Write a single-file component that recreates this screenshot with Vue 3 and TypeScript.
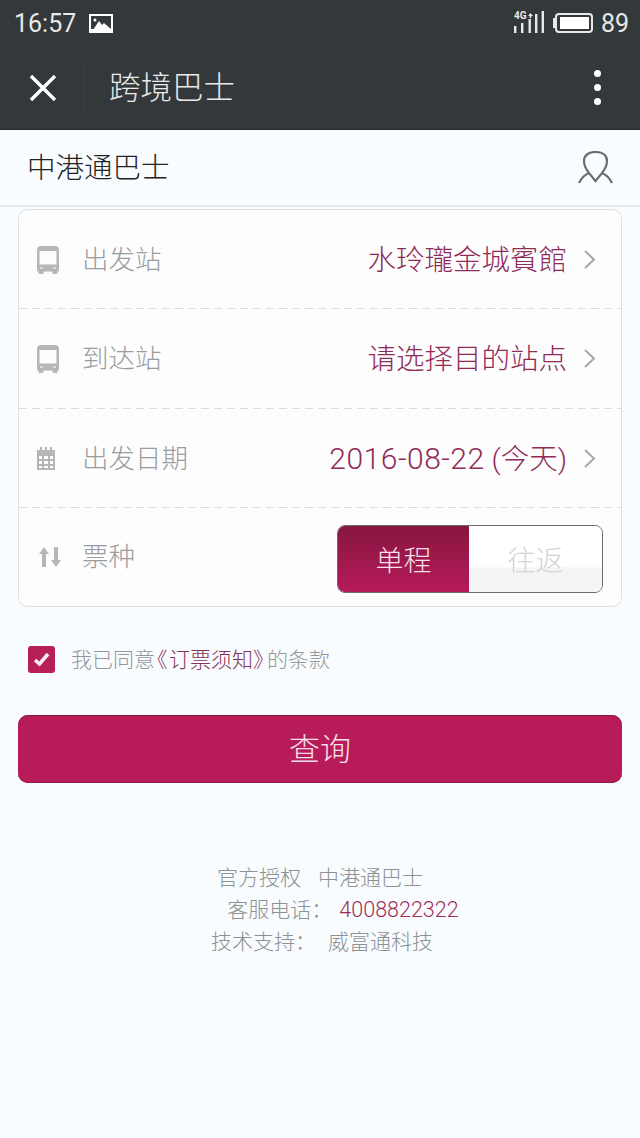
<script setup lang="ts">
interface Row {
  label: string
  value: string
  num?: string
  icon: 'bus' | 'calendar'
}

const rows: Row[] = [
  { label: '出发站', value: '水玲瓏金城賓館', icon: 'bus' },
  { label: '到达站', value: '请选择目的站点', icon: 'bus' },
  { label: '出发日期', num: '2016-08-22', value: ' (今天)', icon: 'calendar' }
]
</script>

<template>
  <div class="page">
    <div class="status-bar">
      <div class="status-left">
        <span class="clock">16:57</span>
        <svg class="pic-icon" width="24" height="19" viewBox="0 0 24 19">
          <rect width="24" height="19" fill="#fff" />
          <rect x="2" y="2" width="20" height="13" fill="#33383a" />
          <path d="M2 19 L10 7 L13 11 L15 9 L22 15 V19 Z" fill="#fff" />
          <circle cx="6" cy="6" r="1.500" fill="#fff" />
        </svg>
      </div>
      <div class="status-right">
        <svg width="30" height="22" viewBox="0 0 30 22" class="signal">
          <text x="0" y="8" class="net">4G</text>
          <path d="M16.500 2 L19 5 L14 5 Z M15.700 5 h1.600 v2 h-1.600 Z" fill="#e8e8e8" />
          <rect x="0" y="15" width="2.400" height="7" fill="#e8e8e8" />
          <rect x="7" y="12" width="2.400" height="10" fill="#e8e8e8" />
          <rect x="14.500" y="8" width="2.400" height="14" fill="#e8e8e8" />
          <rect x="21" y="3" width="2.400" height="19" fill="#e8e8e8" />
          <rect x="27.600" y="0" width="2.400" height="22" fill="#e8e8e8" />
        </svg>
        <div class="battery"><div class="battery-fill"></div></div>
        <span class="battery-num">89</span>
      </div>
    </div>

    <div class="nav-bar">
      <svg class="close-icon" width="28" height="28" viewBox="0 0 28 28">
        <path d="M2 2 L26 26 M26 2 L2 26" stroke="#fff" stroke-width="3.400" fill="none" />
      </svg>
      <div class="nav-divider"></div>
      <div class="nav-title">跨境巴士</div>
      <div class="more">
        <span></span><span></span><span></span>
      </div>
    </div>

    <div class="sub-head">
      <div class="sub-title">中港通巴士</div>
      <svg width="36" height="34" viewBox="0 0 36 34">
        <path d="M11 22 C7 17 6 14 6 10 C6 4 11 1 17.500 1 C24 1 29 4 29 10 C29 14 28 17 24 22 M1 32 C3 28 6 24 11 22 L17.500 30 L24 22 C29 24 32 28 34 32" stroke="#6a6e70" stroke-width="2.200" fill="none" />
      </svg>
    </div>

    <div class="form-card">
      <div v-for="row in rows" :key="row.label" class="form-row">
        <svg v-if="row.icon === 'bus'" class="row-icon" width="22" height="28" viewBox="0 0 22 28">
          <path fill-rule="evenodd" fill="#b4b6b8" d="M4 0 H18 C20.500 0 22 1.500 22 4 V24 C22 25 21.500 25.500 20.500 25.500 V27 C20.500 27.600 20 28 19.500 28 H16.500 C16 28 15.500 27.600 15.500 27 V25.500 H6.500 V27 C6.500 27.600 6 28 5.500 28 H2.500 C2 28 1.500 27.600 1.500 27 V25.500 C0.500 25.500 0 25 0 24 V4 C0 1.500 1.500 0 4 0 Z M2.500 5 V18.500 H19.500 V5 Z" />
          <path fill="#d8d9da" d="M3 21 h3 v2 h-3 Z M16 21 h3 v2 h-3 Z" />
        </svg>
        <svg v-else class="row-icon" width="18" height="23" viewBox="0 0 18 23">
          <path fill-rule="evenodd" fill="#b4b6b8" d="M0 3 H3 V0 H5 V3 H8 V0 H10 V3 H13 V0 H15 V3 H18 V23 H0 Z M2 9 V12 H5 V9 Z M7 9 V12 H11 V9 Z M13 9 V12 H16 V9 Z M2 14 V17 H5 V14 Z M7 14 V17 H11 V14 Z M13 14 V17 H16 V14 Z M2 19 V21 H5 V19 Z M7 19 V21 H11 V19 Z M13 19 V21 H16 V19 Z" />
        </svg>
        <span class="row-label">{{ row.label }}</span>
        <span class="row-value"><span v-if="row.num" class="row-num">{{ row.num }}</span>{{ row.value }}</span>
        <svg class="chevron" width="13" height="21" viewBox="0 0 13 21">
          <path d="M2 2 L11 10.500 L2 19" stroke="#a5a7a9" stroke-width="2" fill="none" />
        </svg>
      </div>
      <div class="form-row last">
        <svg class="row-icon arrows" width="22" height="20" viewBox="0 0 22 20">
          <path fill="#b4b6b8" d="M5 0 L10 7 H7 V20 H3 V7 H0 Z M15 0 H19 V13 H22 L17 20 L12 13 H15 Z" />
        </svg>
        <span class="row-label">票种</span>
        <div class="toggle">
          <div class="toggle-on">单程</div>
          <div class="toggle-off">往返</div>
        </div>
      </div>
    </div>

    <div class="agree">
      <div class="checkbox">
        <svg width="18" height="16" viewBox="0 0 18 16">
          <path d="M2 9 L6.500 13 L15 3" stroke="#fbeaf0" stroke-width="3.600" fill="none" />
        </svg>
      </div>
      <span class="agree-text">我已同意<span class="notice"><span class="bracket">《</span>订票须知<span class="bracket">》</span></span>的条款</span>
    </div>

    <button class="query" type="button">查询</button>

    <div class="footer">
      <div><span class="gap-a">官方授权</span>中港通巴士</div>
      <div class="phone-line"><span class="gap-b">客服电话：</span><span class="phone">4008822322</span></div>
      <div class="tech-line"><span class="gap-c">技术支持：</span>威富通科技</div>
    </div>
  </div>
</template>

<style>
html,
body {
  margin: 0;
  background: #f8fcfe;
}
</style>

<style scoped>
.page {
  width: 640px;
  height: 1138px;
  overflow: hidden;
  background: #f8fcfe;
  font-family: "Roboto", "Noto Sans CJK SC", sans-serif;
  font-weight: 300;
}

.status-bar {
  height: 46px;
  background: #33383a;
  display: flex;
  align-items: center;
  justify-content: space-between;
  padding: 0 11px 0 14px;
  color: #e8e8e8;
  font-size: 25px;
  font-weight: 400;
}

.status-left,
.status-right {
  display: flex;
  align-items: center;
}

.pic-icon {
  margin-left: 13px;
}

.signal {
  margin-top: -2px;
}

.net {
  font-size: 10px;
  font-weight: 700;
  fill: #e8e8e8;
}

.battery {
  position: relative;
  width: 38px;
  height: 20px;
  margin-left: 11px;
  border: 2px solid #e8e8e8;
  border-radius: 4px;
  padding: 2px;
  box-sizing: border-box;
  display: flex;
  justify-content: flex-end;
}

.battery::before {
  content: "";
  position: absolute;
  left: -4px;
  top: 3px;
  width: 2px;
  height: 10px;
  background: #e8e8e8;
}

.battery-fill {
  width: 29px;
  background: #fff;
}

.battery-num {
  margin-left: 8px;
}

.nav-bar {
  height: 84px;
  background: #33383a;
  display: flex;
  align-items: center;
  padding: 0 39px 0 29px;
  border-bottom: 1px solid #2b2e30;
  box-sizing: border-box;
}

.nav-divider {
  width: 1px;
  height: 46px;
  margin-left: 27px;
  background: #3a3f41;
}

.nav-title {
  margin-left: 24px;
  padding-bottom: 6px;
  font-size: 31.500px;
  color: #e9e9e9;
  flex: 1;
}

.more {
  display: flex;
  flex-direction: column;
  gap: 7px;
  margin-bottom: 1px;
}

.more span {
  width: 7px;
  height: 7px;
  border-radius: 50%;
  background: #fff;
}

.sub-head {
  height: 77px;
  display: flex;
  align-items: center;
  justify-content: space-between;
  padding: 0 26px 0 27px;
  box-sizing: border-box;
  border-bottom: 2px solid #e6e8e9;
}

.sub-title {
  padding-bottom: 4px;
  font-size: 28.500px;
  color: #222;
}

.form-card {
  margin: 2px 18px 0;
  height: 398px;
  box-sizing: border-box;
  background: #fdfdfe;
  border: 1px solid #dcdfe2;
  border-radius: 10px;
}

.form-row {
  height: 99.330px;
  box-sizing: border-box;
  display: flex;
  align-items: center;
  padding: 0 25px 0 18px;
  position: relative;
  background: repeating-linear-gradient(90deg, #dcdcdf 0 8px, transparent 8px 13px) left bottom / 100% 1px no-repeat;
}

.form-row.last {
  background: none;
  height: 98px;
}

.row-icon {
  flex: 0 0 auto;
  position: absolute;
  left: 18px;
}

.row-icon.arrows {
  left: 20px;
}

.row-label {
  margin-left: 45px;
  padding-bottom: 4px;
  font-size: 26.500px;
  color: #9a9c9f;
}

.row-value {
  margin-left: auto;
  padding-bottom: 4px;
  font-size: 28.500px;
  color: #8f2b56;
  white-space: pre;
}

.row-num {
  font-size: 30px;
  letter-spacing: 0.500px;
}

.chevron {
  margin-left: 16px;
}

.toggle {
  margin-left: auto;
  margin-top: 4px;
  margin-right: -7px;
  width: 266px;
  height: 68px;
  box-sizing: border-box;
  border: 1px solid #6b6b70;
  border-radius: 8px;
  display: flex;
  overflow: hidden;
  font-size: 28px;
}

.toggle-on {
  width: 131px;
  background: linear-gradient(#871640, #b51b58);
  color: #f8dfe8;
  display: flex;
  align-items: center;
  justify-content: center;
}

.toggle-off {
  flex: 1;
  background: linear-gradient(#fff 62%, #f4f4f6 64%);
  color: #d4d4d6;
  display: flex;
  align-items: center;
  justify-content: center;
}

.agree {
  display: flex;
  align-items: center;
  margin: 36px 0 0 28px;
  font-size: 21px;
  color: #94989b;
}

.agree-text {
  padding-bottom: 2px;
}

.checkbox {
  width: 27px;
  height: 27px;
  border-radius: 3px;
  background: #b81e58;
  display: flex;
  align-items: center;
  justify-content: center;
  margin-right: 16px;
}

.notice {
  color: #843556;
}

.bracket {
  font-feature-settings: "halt";
  letter-spacing: 3.500px;
}

.bracket:first-child {
  margin-left: 2px;
  letter-spacing: 1.500px;
}

.query {
  display: block;
  margin: 40px 18px 0;
  padding: 0 0 6px;
  width: 604px;
  height: 68px;
  border: none;
  border-radius: 10px;
  background: #b71c58;
  color: #f9dfe9;
  font-family: inherit;
  font-weight: 300;
  font-size: 31px;
  box-shadow: inset 0 1px 0 #7e1a40, inset 0 -1px 0 #8f1a47;
}

.footer {
  margin-top: 79px;
  font-size: 21px;
  line-height: 32px;
  color: #8e9194;
  display: flex;
  flex-direction: column;
  align-items: center;
}

.gap-a {
  margin-right: 17px;
}

.gap-b {
  margin-right: 7px;
}

.gap-c {
  margin-right: 12px;
}

.phone-line {
  margin-left: 46px;
}

.tech-line {
  margin-left: 4px;
}

.phone {
  font-size: 21.500px;
  color: #a02c56;
}
</style>
